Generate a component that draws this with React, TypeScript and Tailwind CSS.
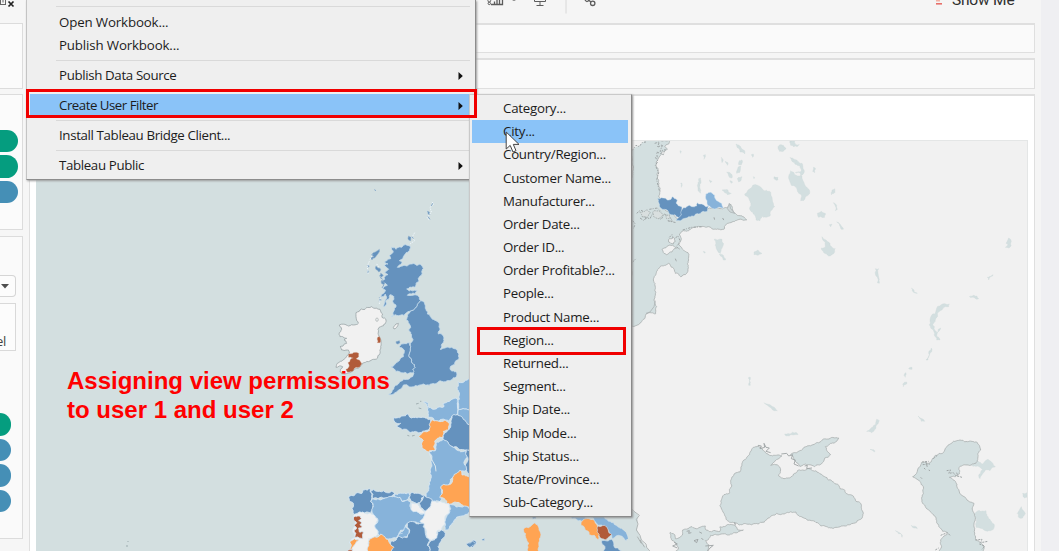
import React from "react";

type Shape = { d: string; f: string };

const DEEP = "#6592be";
const LIGHT = "#87b3da";
const ORANGE = "#ffa453";
const BROWN = "#b15b3a";
const LAND = "#f1f1f1";
const SEA = "#d3dfe0";

// Subdivides every edge with a small repeatable offset, so that shared borders stay aligned.
function rough(points: string, amp = 0.16, minLen = 7): string {
  const p = points.trim().split(/\s+/).map((s) => s.split(",").map(Number));
  const out: string[] = [];
  const split = (a: number[], b: number[]) => {
    const len = Math.hypot(a[0] - b[0], a[1] - b[1]);
    if (len < minLen) {
      out.push(`${b[0].toFixed(1)},${b[1].toFixed(1)}`);
      return;
    }
    const sx = a[0] + b[0];
    const sy = a[1] + b[1];
    const k = Math.min(len, 30) * amp;
    const m = [sx / 2 + Math.sin(sx * 12.9 + sy * 7.3) * k, sy / 2 + Math.cos(sx * 5.7 + sy * 17.1) * k];
    split(a, m);
    split(m, b);
  };
  for (let i = 0; i < p.length; i++) split(p[i], p[(i + 1) % p.length]);
  return out.join(" ");
}

function Shapes({ items, stroke, width = 2, amp }: { items: Shape[]; stroke: string; width?: number; amp?: number }) {
  return (
    <>
      {items.map((s, i) => (
        <polygon key={i} points={rough(s.d, amp)} fill={s.f} stroke={stroke} strokeWidth={width} strokeLinejoin="round" />
      ))}
    </>
  );
}

const ireland: Shape[] = [
  {
    f: LAND,
    d: "155,350 165,355 180,358 188,372 186,382 198,390 195,402 182,410 174,418 178,440 182,470 180,490 172,505 160,508 145,515 125,525 110,535 95,545 75,552 60,545 68,530 48,532 52,520 72,508 88,490 85,480 65,480 60,470 80,460 72,450 80,445 60,440 58,428 65,418 58,405 75,403 85,408 100,405 115,400 110,392 108,380 108,368 120,360 135,358 140,352",
  },
  { f: LAND, d: "220,412 228,402 235,400 230,412 222,417" },
];
const irelandBrown: Shape[] = [
  { f: BROWN, d: "86,492 100,488 116,490 116,500 108,506 118,510 125,520 120,530 108,532 100,542 82,546 78,538 88,528 84,518 92,508 100,504 86,502" },
  { f: BROWN, d: "172,444 178,440 180,458 172,458" },
];

const britain: Shape[] = [
  {
    f: DEEP,
    d: "215,172 228,178 245,172 270,168 268,182 250,200 238,212 246,218 232,232 255,226 275,222 300,222 310,235 305,255 296,275 285,292 260,297 280,302 292,300 285,312 262,316 288,315 298,322 302,332 290,350 275,362 258,370 240,376 226,374 213,380 222,362 228,345 218,335 222,320 210,314 206,328 196,348 190,350 200,325 196,312 182,320 196,300 188,294 202,286 184,276 194,268 192,262 204,254 194,246 206,238 192,226 204,222 194,216 212,206 208,196 220,186",
  },
  {
    f: DEEP,
    d: "302,332 312,335 316,355 322,372 335,385 348,392 358,405 360,420 355,432 370,438 372,452 364,466 360,478 375,474 398,474 412,482 417,492 412,510 404,524 390,535 410,548 408,562 390,572 365,574 345,582 320,585 292,588 265,588 250,585 240,598 225,608 206,613 222,596 235,582 250,568 272,562 282,550 278,538 285,532 275,510 268,490 272,470 276,455 275,435 266,420 272,412 268,402 258,390 262,375 275,362 290,350",
  },
  { f: DEEP, d: "245,462 268,458 272,470 268,490 275,510 285,532 278,538 282,546 270,548 262,552 246,548 228,545 213,530 228,520 242,505 252,490 250,478 238,470" },
];
const isles: Shape[] = [
  { f: DEEP, d: "178,178 175,190 166,202 156,210 152,204 162,200 155,194 166,186" },
  { f: DEEP, d: "168,228 174,234 182,238 176,246 170,240 166,234" },
  { f: DEEP, d: "182,250 190,256 184,262 178,258" },
  { f: DEEP, d: "186,270 194,278 190,284 184,280" },
  { f: DEEP, d: "178,322 184,330 178,334" },
  { f: DEEP, d: "228,455 238,452 240,458 232,462" },
  { f: DEEP, d: "266,138 274,142 272,152 266,150" },
  { f: DEEP, d: "322,64 328,66 330,74 324,72" },
  { f: DEEP, d: "142,226 148,228 144,232" },
  { f: DEEP, d: "142,240 146,244 143,250" },
];

const europe: Shape[] = [
  { f: LIGHT, d: "415,65 450,56 520,56 520,150 450,152 430,146 414,150 412,125 418,105" },
  { f: LIGHT, d: "311,126 325,130 326,142 350,146 372,140 368,132 392,120 412,116 415,150 412,162 396,168 388,185 375,180 348,184 325,172 322,150" },
  { f: LIGHT, d: "414,150 430,146 450,152 520,150 520,200 448,194 430,178 412,166" },
  { f: DEEP, d: "222,172 245,168 262,162 275,174 300,172 332,180 335,200 326,210 300,218 280,216 262,210 240,204 228,196 242,190 224,186" },
  { f: ORANGE, d: "335,180 375,180 388,190 386,208 370,214 368,232 344,244 346,270 325,276 312,268 304,252 310,242 296,230 308,218 328,212" },
  { f: DEEP, d: "396,168 412,164 430,178 450,194 520,200 520,270 438,270 418,268 400,262 382,246 370,240 374,218 388,208" },
  { f: LIGHT, d: "328,278 346,272 348,248 370,238 384,246 400,262 418,272 438,272 442,292 434,315 442,332 415,340 398,352 388,372 364,380 366,400 360,425 340,424 318,410 326,380 330,340 334,310" },
  { f: DEEP, d: "438,270 520,265 520,340 445,340 436,316 443,292" },
  { f: ORANGE, d: "412,338 420,330 426,345 446,350 520,350 520,440 450,442 425,434 400,428 382,432 360,414 366,402 362,380 388,374 398,352" },
  { f: DEEP, d: "88,408 112,398 126,400 128,390 150,386 156,402 152,424 158,440 152,460 128,458 105,464 96,446 100,430 88,422" },
  { f: DEEP, d: "152,392 178,394 215,394 224,402 196,414 174,416 158,416" },
  { f: LAND, d: "102,464 128,456 152,460 170,464 172,482 164,498 174,516 166,530 146,536 144,552 154,562 148,600 90,600 96,560 88,548 104,532 100,505 106,486" },
  { f: LIGHT, d: "158,416 196,414 222,408 240,412 246,424 262,420 272,428 274,448 300,462 316,460 310,478 316,492 282,486 262,490 256,506 236,524 214,536 190,532 174,522 164,498 174,480 156,456 160,440 152,424" },
  { f: LIGHT, d: "224,402 248,400 266,398 272,406 264,418 246,424 240,412 222,410" },
  { f: DEEP, d: "270,402 292,400 314,406 302,428 290,432 274,424 268,412" },
  { f: DEEP, d: "314,406 336,418 332,440 322,456 302,442 298,430 306,422" },
  { f: LAND, d: "274,430 294,432 300,444 318,456 306,460 290,454 274,450" },
  { f: LAND, d: "338,424 362,424 386,430 390,446 380,464 376,492 364,512 352,512 352,534 334,542 318,522 312,496 300,484 314,460 330,444" },
  { f: LIGHT, d: "390,432 420,440 446,444 452,456 426,468 402,482 394,494 374,510 376,492 382,464 392,446" },
  { f: DEEP, d: "262,490 284,486 312,490 316,520 330,540 322,556 330,572 326,610 214,600 216,576 208,556 212,544 236,528 262,532 268,508" },
  { f: LIGHT, d: "258,500 268,510 262,530 248,534 234,526 248,514" },
  { f: ORANGE, d: "146,552 156,534 178,528 182,522 196,532 208,548 222,562 212,580 216,610 150,610" },
  { f: DEEP, d: "352,516 364,510 376,520 370,534 362,546 354,560 352,600 326,600 330,572 324,556 334,542 350,534" },
  { f: BROWN, d: "102,470 120,468 124,476 116,482 126,488 120,494 126,500 116,504 118,516 130,516 128,536 118,534 104,532 108,520 102,510 110,504 102,494 110,488 102,482" },
  { f: ORANGE, d: "104,536 116,540 104,554 96,570 86,572 94,556 90,544" },
  { f: BROWN, d: "84,570 98,568 96,590 84,590" },
  { f: DEEP, d: "440,552 462,540 470,552 458,562" },
];

const italy: Shape[] = [
  { f: ORANGE, d: "178,684 198,678 210,668 222,684 228,704 222,740 216,775 190,775 192,730 182,710" },
  { f: DEEP, d: "196,640 216,640 212,656 204,658" },
  { f: LIGHT, d: "306,640 350,640 368,654 364,668 340,662 322,656" },
  { f: ORANGE, d: "350,664 372,656 390,662 398,680 408,700 400,720 388,706 372,704 360,688 348,676" },
  { f: LIGHT, d: "366,648 398,646 420,656 446,668 470,690 488,708 484,722 460,706 442,716 430,690 400,676 390,664" },
  { f: BROWN, d: "400,678 420,676 430,690 440,704 420,720 404,712 396,696" },
  { f: DEEP, d: "410,722 440,718 446,735 468,752 480,775 418,775 420,740" },
  { f: DEEP, d: "4,732 22,724 32,732 14,742" },
  { f: DEEP, d: "50,718 60,715 58,722" },
];

const baltic =
  "30,30 148,30 146,42 134,50 142,58 124,66 116,84 108,96 114,120 112,145 117,170 116,200 125,228 135,240 160,252 172,266 190,262 220,250 258,240 268,234 300,236 322,232 332,222 338,240 352,256 366,258 380,270 366,268 352,270 336,276 318,284 312,298 290,298 264,290 240,290 214,296 190,302 178,312 184,326 176,342 186,356 204,368 206,390 204,420 196,434 182,440 166,430 156,412 146,400 122,408 110,424 100,450 104,480 102,510 110,530 106,552 78,552 74,566 56,584 30,590";
const balticIslands = [
  "148,326 160,322 166,334 160,342 146,336",
  "126,358 140,350 158,346 170,354 156,366 140,374 132,370",
];
const balticIslets = [
  "60,246 78,240 92,248 84,262 66,260",
  "98,246 118,244 130,254 116,266 100,258",
  "134,252 148,254 152,264 140,266",
];

const blackSea =
  "400,322 414,318 428,330 444,342 466,346 486,348 472,358 452,376 472,374 482,390 476,408 492,416 512,412 524,400 548,390 572,388 596,398 614,410 640,426 660,446 682,462 704,475 722,490 730,520 722,538 700,550 676,558 648,562 620,560 592,548 574,542 552,534 532,524 528,516 500,518 470,520 444,534 414,552 380,552 344,550 320,540 312,520 300,496 312,464 328,460 332,425 342,402 360,396 366,370 386,346";
const azov = "512,344 530,338 552,322 572,318 600,306 632,294 656,294 650,304 632,310 616,320 632,344 614,354 604,372 584,380 566,374 540,380 524,362";
const aegean = "150,578 164,584 166,596 184,588 188,570 204,566 216,560 232,566 256,558 258,570 274,576 300,574 300,560 322,554 346,558 352,568 370,570 344,578 320,584 298,584 272,586 256,602 266,614 260,650 158,650 176,624 164,606 152,592";
const caspian =
  "248,410 262,394 274,368 298,370 316,346 340,338 352,318 370,304 390,300 414,306 440,306 452,330 444,350 438,370 420,376 398,376 386,384 388,402 358,412 376,424 388,456 402,470 414,482 432,490 428,512 436,540 434,570 438,600 462,620 462,650 318,650 330,630 332,600 342,588 354,580 338,574 320,544 296,510 276,480 280,440 264,420";

const northLakes = [
  "348,42 360,48 374,62 374,72 360,66",
  "374,192 384,180 398,166 412,166 432,182 448,184 456,202 460,220 464,230 456,240 450,258 426,258 420,272 408,270 400,252 390,240 388,210",
  "476,50 490,46 498,56 490,62 480,60",
  "306,180 324,180 334,190 322,194",
  "282,328 306,328 308,350 302,370 294,366 286,346",
  "298,372 310,376 318,388 310,390",
  "402,366 414,360 426,370 414,376 402,374",
  "236,146 242,144 240,168 242,190 234,182 232,166",
  "358,92 366,90 364,104 356,104", "354,112 362,108 358,128 350,130", "352,146 366,140 356,156", "320,126 334,132 336,144 326,138",
  "304,82 310,90 306,98", "316,94 324,98 322,106", "182,160 186,160 184,172", "268,150 276,154 272,158", "250,76 256,74 252,88", "180,62 184,64 182,70", "394,74 400,72 398,82", "462,140 472,144 474,150 464,148", "250,364 256,366 254,370", "400,140 404,142 402,146", "330,152 338,156 334,160",
];
const eastLakes = [
  "54,440 64,434 78,446 70,454 58,454", "90,422 104,424 106,432 118,434 112,440 92,436",
  "90,472 110,480 126,490 132,510 128,524 122,530 120,518 106,518 124,512 120,498 98,486",
  "92,512 100,516 108,526 126,528 132,548 148,570 148,582 136,592 130,602 122,602 124,584 108,562 90,546 86,530",
  "160,502 166,504 164,518 158,514", "216,570 224,566 222,580 214,584", "220,608 230,616 232,628 226,632 226,618",
  "172,640 184,634 196,640 194,652 176,652", "230,666 240,672 250,688 244,688", "208,674 216,672 212,680",
  "186,710 198,720 210,736 226,746 222,760 206,768 194,760 184,744 196,742", "346,806 356,806 354,820 358,850 352,848 352,832 346,822",
  "454,864 462,870 472,880 462,878", "738,730 746,714 754,724 746,744 736,742 744,732", "682,832 698,824 698,828 688,834 686,840", "628,890 640,886 656,896 650,898 640,892",
  "42,532 54,532 50,540", "510,960 524,942 528,932 544,914 568,912 566,920 552,922 546,930 532,940 526,964 518,974 524,990 532,998 542,984 530,1010 540,1020 530,1020 524,1000 512,984",
];
const southLakes = [
  "386,112 391,112 391,136 386,136", "432,188 450,194 472,212 458,210", "494,282 510,282 530,278 534,284 512,284 498,288",
];
const southEastLakes = [
  "304,24 306,28 300,40 294,60 288,60 296,40", "236,86 246,82 246,88", "222,106 228,98 226,112", "218,132 230,126 230,132 220,140",
  "264,228 276,236 284,244 274,244", "110,274 128,262 140,238 148,242 138,262 124,278", "120,328 134,332 134,336",
  "424,376 440,360 458,372 474,358 496,380 480,392 466,390 450,416 446,406 458,388", "434,520 444,512 468,512 476,536 492,552 490,568 466,572 438,562",
  "578,460 590,458 592,472 584,474", "562,520 574,500 586,520 578,534 566,532", "196,572 216,584 216,592", "244,556 262,566 252,564",
];

function Lakes({ items, at }: { items: string[]; at: string }) {
  return (
    <g transform={at}>
      {items.map((d, i) => (
        <polygon key={i} points={rough(d)} fill={SEA} stroke="#cbd8d8" strokeWidth={1} />
      ))}
    </g>
  );
}

function Coast({ d }: { d: string }) {
  return <polygon points={rough(d, 0.13, 5)} fill={SEA} stroke="#aeb4b4" strokeWidth={2.6} />;
}

const S = "scale(0.33333)";

function MapView() {
  return (
    <svg className="block h-[411px] w-[992px]" viewBox="36 140 992 411">
      <rect x="36" y="140" width="992" height="411" fill={SEA} />
      <path d="M632 140H1028V551H649L642 541L637 530L638 515L632 510Z" fill={LAND} />
      <g transform={`translate(620 340) ${S}`} fill="none" stroke="#a9afaf" strokeWidth="2.6">
        <path d="M34 506 42 514 58 526 49 538 54 552 49 570 60 586 64 600 78 612 80 622 90 634" />
        <path d="M52 590 64 610 60 600 74 622" />
      </g>
      <g transform={`translate(320 190) ${S}`}>
        <Shapes items={ireland} stroke="#9ba5a7" width={2.4} />
        <Shapes items={irelandBrown} stroke="#c99983" width={1} />
        <ellipse cx="171" cy="389" rx="4" ry="5" fill="#e9eded" stroke="#a9afaf" strokeWidth="2" />
        <Shapes items={britain} stroke="#c5dcec" width={2.4} amp={0.18} />
        <Shapes items={isles} stroke="#8fb0cc" width={1.6} />
        <g fill="none" stroke="#eef6fb" strokeWidth="3" strokeDasharray="4 3">
          <path d="M284 128 276 142 284 152 270 162M336 36 342 42 330 52 334 66 322 82 328 92M148 214 142 228 144 252M170 222 178 232M150 208 158 194M180 324 178 344" />
        </g>
        <path d="M276 140 280 146M334 48 338 40M324 80 330 88M163 -1 168 2M192 284 186 294M180 262 188 268" fill="none" stroke="#7ba0c6" strokeWidth="2.6" />
      </g>
      <g transform={`translate(320 360) ${S}`}>
        <Shapes items={europe} stroke="#d6e7f3" width={2.6} />
        <path d="M328 280 336 300 346 318 348 334" fill="none" stroke="#dbe8ef" strokeWidth="3" />
        <path d="M414 166 412 120M236 522 248 520" fill="none" stroke="#d6e7f3" strokeWidth="2" />
        <g fill="none" stroke="#a2b0b3" strokeWidth="3">
          <path d="M288 132 296 130M300 124 304 124M296 144 304 146M262 226 268 228M276 228 284 226" />
        </g>
      </g>
      <g transform={`translate(465 300) ${S}`}>
        <Shapes items={italy} stroke="#cfe0eb" width={2} />
      </g>
      <g transform={`translate(620 130) ${S}`}>
        <Coast d={baltic} />
        <polygon points="36,30 78,30 66,40 58,48 48,50 36,62" fill={LAND} />
        <g fill="none" stroke="#9fa5a6" strokeWidth="3" strokeDasharray="7 3 3 4">
          <path d="M36 62 48 46 58 50 66 38 78 36M104 40 118 36 112 52 128 44 120 64 136 58 130 74 110 66 112 86M106 82 114 94 106 106 116 128 110 150 118 182" />
          <path d="M50 250 62 240 76 248 70 262 90 266 98 250 110 244 108 262 124 268 132 252 150 262 158 274 142 272 168 278M60 264 72 272 84 256M88 238 112 234 122 244M38 272 46 282 40 296M38 396 48 386M188 300 214 292 248 290" />
          <path d="M148 322 156 314 160 328 174 318 182 336 168 350 180 358M166 386 170 396M282 262 284 270M308 264 312 272" />
        </g>
        {balticIslands.map((d, i) => (
          <polygon key={i} points={rough(d)} fill={LAND} stroke="#a4abac" strokeWidth="2.2" />
        ))}
        {balticIslets.map((d, i) => (
          <polygon key={i} points={rough(d)} fill="#d9dfdf" stroke="#a4abac" strokeWidth="2.6" strokeDasharray="5 3" />
        ))}
        <polygon points="328,220 332,236 344,250 330,246 322,236" fill="#cfd8d9" stroke="#a4abac" strokeWidth="2" />
        <path d="M78 550 90 546 102 530 106 512" fill="none" stroke="#a4abac" strokeWidth="2" />
        <Shapes
          stroke="#d6e7f3"
          width={1.4}
          amp={0.16}
          items={[
            { f: DEEP, d: "112,206 130,204 142,210 158,200 172,210 168,219 186,231 190,250 176,264 164,254 148,252 134,238 118,228" },
            { f: DEEP, d: "190,233 208,226 230,228 232,218 250,224 266,229 262,244 236,252 212,260 190,266 168,272 184,254" },
            { f: LIGHT, d: "257,192 272,187 284,195 288,209 306,221 310,235 284,237 264,227 261,212" },
          ]}
        />
      </g>
      <Lakes items={northLakes} at={`translate(620 130) ${S}`} />
      <Lakes items={eastLakes} at={`translate(760 0) ${S}`} />
      <Lakes items={southLakes} at={`translate(620 340) ${S}`} />
      <Lakes items={southEastLakes} at={`translate(830 340) ${S}`} />
      <g transform={`translate(620 340) ${S}`}>
        <Coast d={blackSea} />
        <Coast d={azov} />
        <Coast d={aegean} />
        <g fill="none" stroke="#9fa5a6" strokeWidth="2.8">
          <path d="M414 316 424 318 420 326 434 322 432 310 438 322 448 324 438 334 452 338M484 342 500 340 506 348 518 344 514 356 526 360 522 372 536 378M554 378 562 376 560 386 576 384M344 546 346 556" />
          <path d="M200 574 208 572 206 580 214 578M222 602 234 598 230 608ZM238 576 246 580M244 594 250 600M256 618 280 616 270 624 262 634M162 606 172 612 158 618 172 624" />
        </g>
        <path d="M0 568 14 580 20 598" fill="none" stroke={LIGHT} strokeWidth="9" />
      </g>
      <g transform={`translate(830 340) ${S}`}>
        <Coast d={caspian} />
        <g fill="none" stroke="#9fa5a6" strokeWidth="3" strokeDasharray="6 3">
          <path d="M276 366 296 364M278 374 300 372M288 366 292 382M282 384 286 388M296 390 300 392M350 392 362 390 356 400 370 398 376 406 396 412M380 398 384 410M272 412 276 416M310 356 322 346M436 600 456 598 452 608 474 604M448 612 464 618 456 628M332 586 352 578 362 588M316 630 326 624" />
        </g>
      </g>
      <g fill="#b7c5c7">
        <rect x="127" y="541" width="2" height="1" />
        <rect x="126" y="545" width="2" height="2" />
      </g>
      <path d="M36 140.5H1028M1027.5 140V551" fill="none" stroke="#e4e6e6" />
    </svg>
  );
}

function Pill({ green = false, short = false }: { green?: boolean; short?: boolean }) {
  return <div className={`h-[22.5px] shrink-0 rounded-r-full ${short ? "w-[11px]" : "w-[17.5px]"} ${green ? "bg-[#059d7f]" : "bg-[#458fb6]"}`} />;
}

function Sidebar() {
  return (
    <div className="flex h-[551px] w-[30px] shrink-0 flex-col border-r border-[#dfdfdf] bg-[#f6f6f6]">
      <div className="h-[23px]">
        <svg className="block" width="16" height="10" viewBox="0 0 16 10" fill="none">
          <path d="M0 4.5H6M0.5 0V4M3 0V2.5M5.5 0V4.5" stroke="#555" strokeWidth="0.9" />
          <path d="M8.5 1.5L13.5 6.5M13.5 1.5L8.5 6.5" stroke="#222" strokeWidth="1.7" />
        </svg>
      </div>
      <div className="h-[66px] w-[23px] border border-l-0 border-[#dcdcdc] bg-[#fbfbfb]" />
      <div className="mt-[5px] flex h-[136px] w-[23px] flex-col gap-[3px] border border-l-0 border-[#dcdcdc] bg-[#fbfbfb] pt-[34.5px]">
        <Pill green />
        <Pill green />
        <Pill />
      </div>
      <div className="mt-[6px] flex h-[303px] w-[23px] flex-col border border-l-0 border-[#dcdcdc] bg-[#fafafa]">
        <div className="mt-[38px] flex h-[22px] w-[16px] items-center justify-end rounded-r-sm border border-l-0 border-[#d5d5d5] bg-[#fcfcfc] pr-[6px]">
          <svg width="8" height="5" viewBox="0 0 8 5">
            <path d="M0 0H8L4 4.6Z" fill="#4e4e4e" />
          </svg>
        </div>
        <div className="mt-[6px] h-[48px] w-[16px] overflow-hidden border border-l-0 border-[#d9d9d9] bg-[#fcfcfc] pt-[29px] font-['Open_Sans',sans-serif] text-[13px] leading-[16px] tracking-[-0.4px] text-[#444]">
          <div className="-ml-[4px]">el</div>
        </div>
        <div className="mt-[62px] flex flex-col gap-[3px]">
          <Pill green short />
          <Pill short />
          <Pill short />
          <Pill short />
        </div>
      </div>
    </div>
  );
}

function Toolbar() {
  return (
    <div className="flex h-[23px] items-start">
      <svg className="ml-[456px] block" width="150" height="16" viewBox="486 0 150 16" fill="none" stroke="#5c5c5c" strokeWidth="1">
        <path d="M491 4.5H502.5V0M494.5 1.5V4M497 0V4M499.5 0V4" strokeWidth="1.3" />
        <circle cx="489.3" cy="0.6" r="1.4" />
        <circle cx="489.3" cy="3.4" r="1.2" />
        <path d="M512 0H516L514 1Z" fill="#777" stroke="none" />
        <path d="M534.5 0V1.5H545.5V0M540 1.5V5M536.5 5.5H543.5" />
        <path d="M566 0V13.5" stroke="#d8d8d8" />
        <circle cx="592.7" cy="3.3" r="2.2" strokeWidth="1.3" />
        <path d="M585 0Q587 3 589 0M588.5 0 591 2" strokeWidth="1.3" />
      </svg>
      <svg className="ml-[300px] block" width="8" height="6" viewBox="0 0 8 6">
        <rect x="0" y="0" width="4" height="1.5" fill="#f3b2a6" />
        <rect x="0" y="3" width="6" height="1.6" fill="#e8706a" />
      </svg>
      <div className="-mt-[9px] ml-[8px] whitespace-nowrap font-['Roboto',sans-serif] text-[15.5px] leading-[18px] tracking-[-0.2px] text-[#303030]">Show Me</div>
    </div>
  );
}

function MenuRow({ label, arrow = false, className = "", text = "" }: { label: string; arrow?: boolean; className?: string; text?: string }) {
  return (
    <div className={`flex h-[23px] shrink-0 items-center justify-between pl-[29px] ${className || "pr-[9px]"}`}>
      <span className={`whitespace-nowrap ${text}`}>{label}</span>
      {arrow && (
        <svg width="5" height="8" viewBox="0 0 5 8">
          <path d="M0.5 0L4.8 4L0.5 8Z" fill="#111" />
        </svg>
      )}
    </div>
  );
}

function Divider() {
  return <div className="my-[3px] ml-[26px] mr-[2px] h-px shrink-0 bg-[#d9d9d9]" />;
}

const fields = [
  "Category...", "City...", "Country/Region...", "Customer Name...", "Manufacturer...", "Order Date...", "Order ID...", "Order Profitable?...", "People...",
  "Product Name...", "Region...", "Returned...", "Segment...", "Ship Date...", "Ship Mode...", "Ship Status...", "State/Province...", "Sub-Category...",
];

export default function App() {
  return (
    <div className="relative h-[551px] w-[1059px] overflow-hidden bg-[#f5f5f5]">
      <div className="flex h-full">
        <Sidebar />
        <div className="flex w-[1011px] flex-col">
          <Toolbar />
          <div className="h-[30px] w-[1005px] shrink-0 border border-l-0 border-t-2 border-[#dfdfdf] bg-[#fafafa]" />
          <div className="mt-[5px] h-[31px] w-[1005px] shrink-0 border border-l-0 border-t-2 border-[#dfdfdf] bg-[#fafafa]" />
          <div className="mt-[5px] h-[457px] w-[1005px] shrink-0 border border-b-0 border-l-0 border-t-2 border-[#dfdfdf] bg-white pl-[6px] pt-[44px]">
            <MapView />
          </div>
        </div>
        <div className="flex-1 bg-[#efeff2]" />
      </div>

      <div className="absolute left-[67px] top-[366px] whitespace-nowrap font-['Liberation_Sans',Arial,sans-serif] text-[24px] font-bold leading-[29px] text-[#ff0000]">
        Assigning view permissions
        <br />
        to user 1 and user 2
      </div>

      <div className="absolute left-[26px] top-0 flex h-[180px] w-[450px] flex-col overflow-hidden border border-t-0 border-[#c4c4c4] border-b-[#8c8c8c] border-r-[#8c8c8c] bg-[#efefef] px-[3px] font-['Open_Sans',sans-serif] text-[13.3px] tracking-[-0.36px] text-[#1c1c1c] shadow-[1px_1px_2px_#9b9b9b]">
        <MenuRow label="Sign In to Another Server..." className="-mt-[20px]" />
        <Divider />
        <MenuRow label="Open Workbook..." className="mt-[1px]" text="tracking-[-0.15px]" />
        <MenuRow label="Publish Workbook..." text="tracking-[-0.15px]" />
        <Divider />
        <MenuRow label="Publish Data Source" arrow />
        <Divider />
        <MenuRow label="Create User Filter" arrow className="mr-[3px] bg-[#8ac3f8] pr-[6px]" text="tracking-[-0.5px]" />
        <Divider />
        <MenuRow label="Install Tableau Bridge Client..." />
        <Divider />
        <MenuRow label="Tableau Public" arrow />
      </div>

      <div className="absolute left-[469px] top-[94px] h-[423px] w-[163px] border border-[#c9c9c9] border-b-[#8a8a8a] border-r-[#8a8a8a] bg-[#efefef] pl-[2px] pr-[3px] pt-[2px] font-['Open_Sans',sans-serif] text-[13.3px] tracking-[-0.25px] text-[#1c1c1c] shadow-[1px_1px_2px_#8f8f8f]">
        {fields.map((f) => (
          <div key={f} className={`flex h-[23.18px] items-center whitespace-nowrap pl-[31px] pt-px ${f === "City..." ? "bg-[#8ac3f8]" : ""}`}>
            {f}
          </div>
        ))}
      </div>

      <div className="absolute left-[26px] top-[89px] h-[29px] w-[451px] border-[3px] border-[#f00000]" />
      <div className="absolute left-[477px] top-[327px] h-[28px] w-[149px] border-[3px] border-[#f00000]" />
      <svg className="absolute left-[505px] top-[131px]" width="17" height="23" viewBox="0 0 17 23">
        <path d="M1.2 1V18L5.2 14.4L8 21L11 19.7L8.3 13.4H14Z" fill="#fff" stroke="#444" strokeWidth="1" />
      </svg>
    </div>
  );
}
